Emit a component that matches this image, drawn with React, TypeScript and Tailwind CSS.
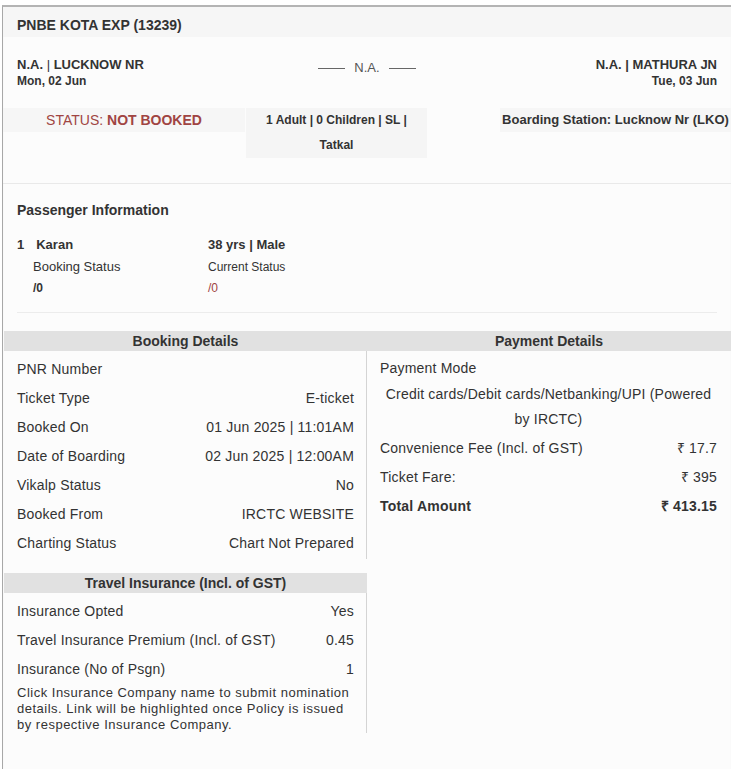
const booking: [string, string][] = [
  ["PNR Number", ""],
  ["Ticket Type", "E-ticket"],
  ["Booked On", "01 Jun 2025 | 11:01AM"],
  ["Date of Boarding", "02 Jun 2025 | 12:00AM"],
  ["Vikalp Status", "No"],
  ["Booked From", "IRCTC WEBSITE"],
  ["Charting Status", "Chart Not Prepared"],
];

const insurance: [string, string][] = [
  ["Insurance Opted", "Yes"],
  ["Travel Insurance Premium (Incl. of GST)", "0.45"],
  ["Insurance (No of Psgn)", "1"],
];

function Row({ label, value, bold }: { label: string; value: string; bold?: boolean }) {
  return (
    <div className={`flex h-[29px] items-center justify-between ${bold ? "font-bold" : ""}`}>
      <span>{label}</span>
      <span>{value}</span>
    </div>
  );
}

export default function App() {
  return (
    <div className="min-h-[769px] bg-white pt-[5px] text-[#333] font-['Liberation_Sans',Arial,sans-serif]">
      <div className="ml-[2px] min-h-[764px] border-l border-t-2 border-l-[#a8a8a8] border-t-[#b4b4b4] bg-[#fcfcfc] shadow-[inset_0_1px_1px_rgba(0,0,0,0.08)]">
        {/* Title */}
        <div className="h-[30px] bg-[#f6f6f6] pl-[14px] pt-[10px] text-[14px] font-bold leading-[16px]">
          PNBE KOTA EXP (13239)
        </div>

        {/* Stations */}
        <div className="grid grid-cols-[1fr_auto_1fr] items-start px-[14px] pt-[20px] font-bold">
          <div className="leading-[16px]">
            <div className="text-[13px]">N.A. <span className="font-normal">|</span> LUCKNOW NR</div>
            <div className="text-[12px]">Mon, 02 Jun</div>
          </div>
          <div className="mt-[3px] flex items-center gap-[9px] text-[13px] font-normal leading-[16px] text-[#555]">
            <span className="h-px w-[27px] bg-[#666]" />
            <span>N.A.</span>
            <span className="h-px w-[27px] bg-[#666]" />
          </div>
          <div className="text-right leading-[16px]">
            <div className="text-[13px]">N.A. | MATHURA JN</div>
            <div className="text-[12px]">Tue, 03 Jun</div>
          </div>
        </div>

        {/* Status row */}
        <div className="mt-[19px] flex items-start">
          <div className="flex h-[24px] w-[242px] items-center justify-center bg-[#f6f6f6] text-[14px] text-[#a04442]">
            STATUS:&nbsp;<span className="font-bold">NOT BOOKED</span>
          </div>
          <div className="ml-px w-[181px] bg-[#f5f5f5] text-center text-[12px] font-bold leading-[25px]">
            1 Adult | 0 Children | SL |<br />Tatkal
          </div>
          <div className="ml-auto flex h-[24px] w-[231px] items-center justify-center bg-[#f6f6f6] text-[13px] font-bold">
            Boarding Station: Lucknow Nr (LKO)
          </div>
        </div>

        <div className="mt-[25px] h-px bg-[#e9e9e9]" />

        {/* Passenger */}
        <div className="px-[14px]">
          <div className="pt-[17px] text-[14px] font-bold leading-[18px]">Passenger Information</div>
          <div className="mt-[18px] flex text-[13px] font-bold leading-[16px]">
            <div className="w-[191px]">
              <span>1</span>
              <span className="ml-[12px]">Karan</span>
            </div>
            <div>38 yrs | Male</div>
          </div>
          <div className="mt-[6px] flex leading-[16px]">
            <div className="w-[191px] pl-[16px] text-[13px]">Booking Status</div>
            <div className="text-[12px]">Current Status</div>
          </div>
          <div className="mt-[5px] flex text-[12px] leading-[16px]">
            <div className="w-[191px] pl-[16px] font-bold">/0</div>
            <div className="text-[#a04442]">/0</div>
          </div>
          <div className="mt-[16px] h-px bg-[#ececec]" />
        </div>

        {/* Details */}
        <div className="mt-[18px] flex text-[14px] tracking-[0.2px]">
          <div className="w-[364px]">
            <div className="ml-px flex h-[20px] items-center justify-center bg-[#e1e1e1] font-bold tracking-normal">Booking Details</div>
            <div className="border-r border-[#d4d4d4] pb-[1px] pl-[14px] pr-[12px] pt-[4px]">
              {booking.map(([l, v]) => (
                <Row key={l} label={l} value={v} />
              ))}
            </div>

            <div className="mt-[14px] ml-px flex h-[20px] items-center justify-center bg-[#e1e1e1] font-bold tracking-normal">
              Travel Insurance (Incl. of GST)
            </div>
            <div className="border-r border-[#d4d4d4] pl-[14px] pr-[12px] pt-[4px]">
              {insurance.map(([l, v]) => (
                <Row key={l} label={l} value={v} />
              ))}
              <p className="pt-[1px] text-[13px] leading-[16px] tracking-[0.5px]">
                Click Insurance Company name to submit nomination details. Link will be highlighted once Policy is issued by respective Insurance Company.
              </p>
            </div>
          </div>

          <div className="flex-1">
            <div className="flex h-[20px] items-center justify-center bg-[#e1e1e1] font-bold tracking-normal">Payment Details</div>
            <div className="pl-[13px] pr-[14px] pt-[4px]">
              <div className="flex h-[27px] items-center">Payment Mode</div>
              <div className="text-center leading-[25px]">
                Credit cards/Debit cards/Netbanking/UPI (Powered by IRCTC)
              </div>
              <div className="mt-[2px]">
                <Row label="Convenience Fee (Incl. of GST)" value="₹ 17.7" />
                <Row label="Ticket Fare:" value="₹ 395" />
                <Row label="Total Amount" value="₹ 413.15" bold />
              </div>
            </div>
          </div>
        </div>
      </div>
    </div>
  );
}
